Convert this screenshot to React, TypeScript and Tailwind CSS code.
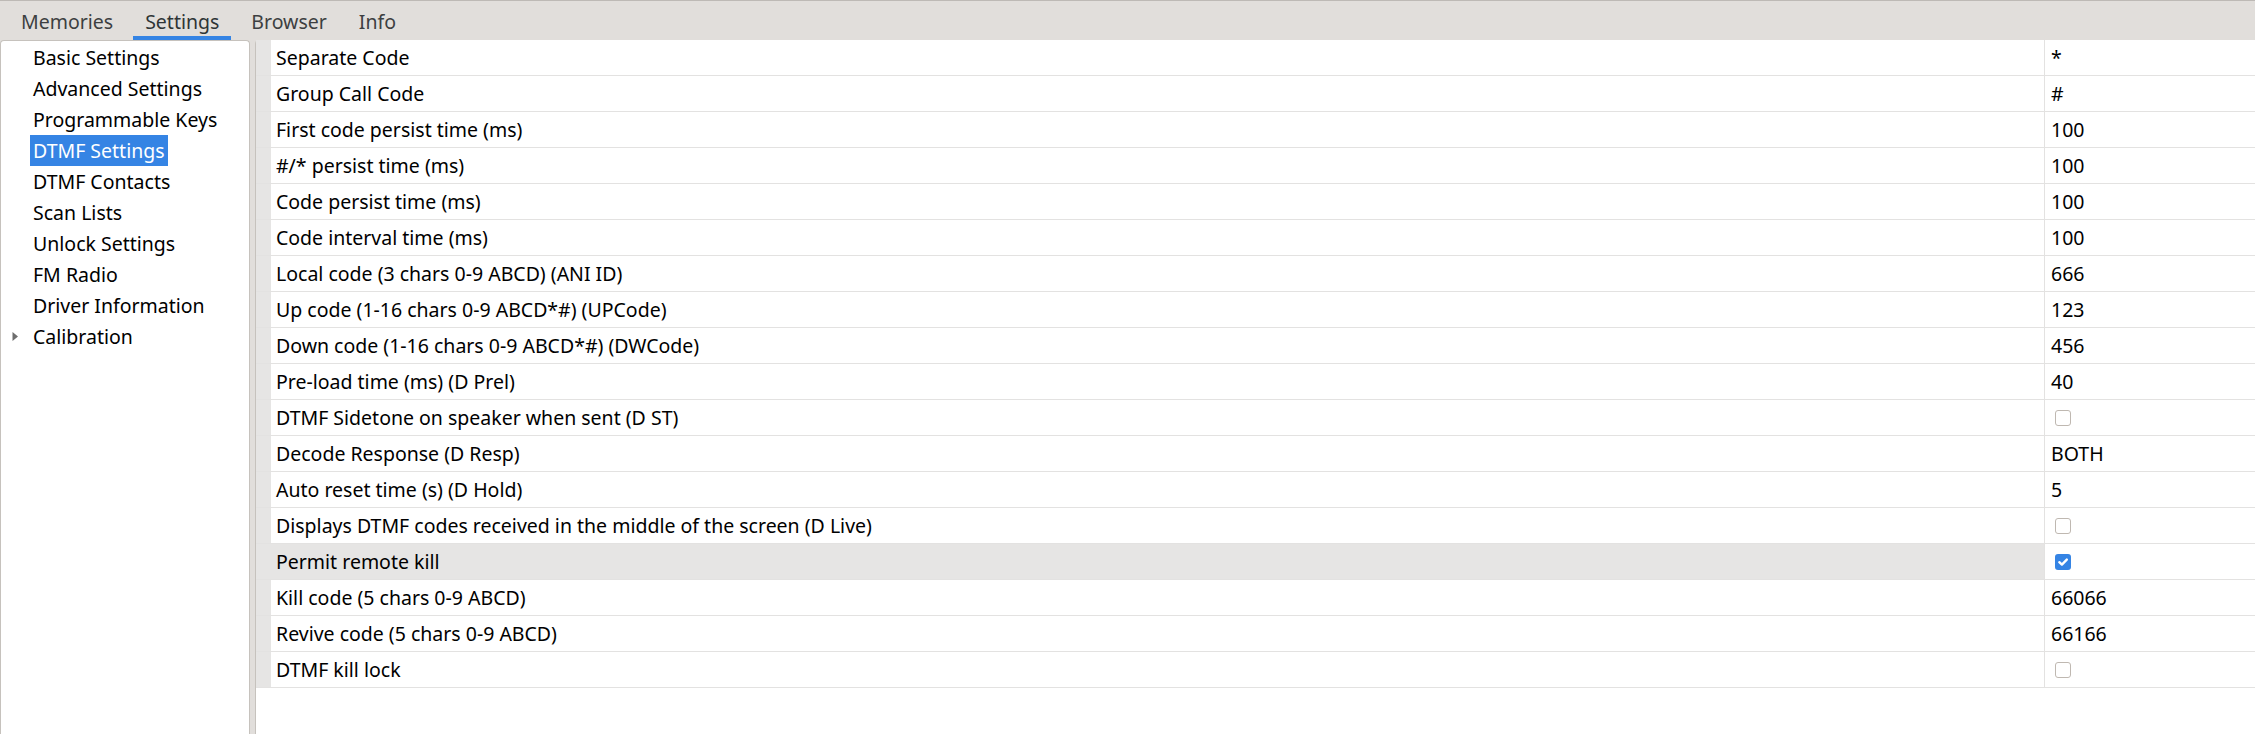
import React from "react";

const tabs = ["Memories", "Settings", "Browser", "Info"];
const tree = [
  "Basic Settings",
  "Advanced Settings",
  "Programmable Keys",
  "DTMF Settings",
  "DTMF Contacts",
  "Scan Lists",
  "Unlock Settings",
  "FM Radio",
  "Driver Information",
  "Calibration",
];

type Row = { label: string; value?: string; check?: boolean; hl?: boolean };
const rows: Row[] = [
  { label: "Separate Code", value: "*" },
  { label: "Group Call Code", value: "#" },
  { label: "First code persist time (ms)", value: "100" },
  { label: "#/* persist time (ms)", value: "100" },
  { label: "Code persist time (ms)", value: "100" },
  { label: "Code interval time (ms)", value: "100" },
  { label: "Local code (3 chars 0-9 ABCD) (ANI ID)", value: "666" },
  { label: "Up code (1-16 chars 0-9 ABCD*#) (UPCode)", value: "123" },
  { label: "Down code (1-16 chars 0-9 ABCD*#) (DWCode)", value: "456" },
  { label: "Pre-load time (ms) (D Prel)", value: "40" },
  { label: "DTMF Sidetone on speaker when sent (D ST)", check: false },
  { label: "Decode Response (D Resp)", value: "BOTH" },
  { label: "Auto reset time (s) (D Hold)", value: "5" },
  { label: "Displays DTMF codes received in the middle of the screen (D Live)", check: false },
  { label: "Permit remote kill", check: true, hl: true },
  { label: "Kill code (5 chars 0-9 ABCD)", value: "66066" },
  { label: "Revive code (5 chars 0-9 ABCD)", value: "66166" },
  { label: "DTMF kill lock", check: false },
];

function Check({ on }: { on: boolean }) {
  if (on)
    return (
      <div className="w-[16px] h-[16px] rounded-[3px] bg-[#3584e4] flex items-center justify-center">
        <svg width="12" height="12" viewBox="0 0 12 12">
          <path d="M2.3 6.2 L4.9 8.6 L9.8 3.6" fill="none" stroke="white" strokeWidth="2.4" strokeLinecap="round" strokeLinejoin="round" />
        </svg>
      </div>
    );
  return <div className="w-[16px] h-[16px] rounded-[3px] border border-[#bfb8b1] bg-white" />;
}

export default function App() {
  return (
    <div className="w-[2255px] h-[734px] overflow-hidden flex flex-col bg-[#e1dedb] text-black font-['Noto_Sans',_'Open_Sans',_sans-serif] text-[19.5px] leading-none">
      <div className="h-[40px] shrink-0 border-t border-[#bdb9b5] flex pl-[9px] gap-[8px]">
        {tabs.map((t) => (
          <div
            key={t}
            className={
              "relative px-[12px] flex items-center pt-[2px] " +
              (t === "Settings" ? "text-[#2e3436]" : "text-[#3d3f41]")
            }
          >
            {t}
            {t === "Settings" && (
              <div className="absolute left-0 right-0 bottom-0 h-[4px] bg-[#3584e4]" />
            )}
          </div>
        ))}
      </div>
      <div className="flex-1 flex gap-[5px] min-h-0">
        <div className="w-[250px] shrink-0 bg-white border border-b-0 border-[#c6c2bd] rounded-t-[4px] pt-[1px]">
          {tree.map((t) => (
            <div key={t} className="h-[31px] flex items-center relative">
              {t === "Calibration" && (
                <svg className="absolute left-[11px] top-[10px]" width="7" height="11" viewBox="0 0 7 11">
                  <path d="M0.5 1 L6 5.5 L0.5 10 Z" fill="#6e6e6e" />
                </svg>
              )}
              <span
                className={
                  "ml-[29px] px-[3px] h-[31px] flex items-center " +
                  (t === "DTMF Settings" ? "bg-[#3584e4] text-white" : "")
                }
              >
                {t}
              </span>
            </div>
          ))}
        </div>
        <div className="flex-1 bg-white border-l border-[#c6c2bd] rounded-tl-[4px] flex flex-col">
          {rows.map((r) => (
            <div key={r.label} className="h-[36px] flex border-b border-[#e3e2e1]">
              <div className="w-[15px] shrink-0 bg-[#e6e5e4]" />
              <div
                className={
                  "w-[1773px] shrink-0 flex items-center pl-[5px] pt-[1px] " +
                  (r.hl ? "bg-[#e6e5e4]" : "")
                }
              >
                {r.label}
              </div>
              <div className="flex-1 border-l border-[#e3e2e1] flex items-center pl-[6px] pt-[1px]">
                {r.check !== undefined ? (
                  <div className="ml-[4px]">
                    <Check on={r.check} />
                  </div>
                ) : (
                  r.value
                )}
              </div>
            </div>
          ))}
          <div className="flex-1" />
        </div>
      </div>
    </div>
  );
}
